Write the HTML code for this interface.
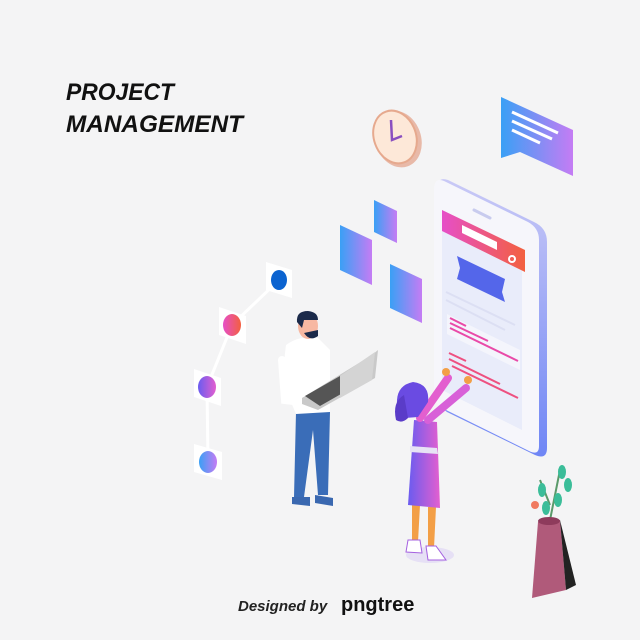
<!DOCTYPE html>
<html><head><style>
html,body{margin:0;padding:0;background:#f4f4f5;}
svg{display:block}
text{font-family:"Liberation Sans",sans-serif}
</style></head><body>
<svg width="640" height="640" viewBox="0 0 640 640" xmlns="http://www.w3.org/2000/svg">
<defs>
<linearGradient id="bp" x1="0" y1="0" x2="1" y2="0"><stop offset="0" stop-color="#3aa0f5"/><stop offset="1" stop-color="#c57cf4"/></linearGradient>
<linearGradient id="pk" x1="0" y1="0" x2="1" y2="0"><stop offset="0" stop-color="#e64fc8"/><stop offset="1" stop-color="#f3603f"/></linearGradient>
<linearGradient id="pu" x1="0" y1="0" x2="1" y2="0"><stop offset="0" stop-color="#6a5cf0"/><stop offset="1" stop-color="#e35fcf"/></linearGradient>
<linearGradient id="ph" x1="0" y1="0" x2="0" y2="1"><stop offset="0" stop-color="#c9c9f6"/><stop offset="1" stop-color="#6f86f5"/></linearGradient>
</defs>
<rect width="640" height="640" fill="#f4f4f5"/>
<text x="66" y="100" font-size="24" font-weight="bold" font-style="italic" fill="#111" textLength="108" lengthAdjust="spacingAndGlyphs">PROJECT</text>
<text x="66" y="132" font-size="24" font-weight="bold" font-style="italic" fill="#111" textLength="177" lengthAdjust="spacingAndGlyphs">MANAGEMENT</text>

<!-- clock -->
<ellipse cx="398" cy="139" rx="23" ry="29" transform="rotate(-20 398 139)" fill="#e8b9a8"/>
<ellipse cx="395" cy="137" rx="21" ry="27" transform="rotate(-20 395 137)" fill="#fde8d8" stroke="#e6a98e" stroke-width="2"/>
<path d="M391 120 L392 140 L402 136" stroke="#8a4fc0" stroke-width="2.5" fill="none"/>

<!-- chat bubble -->
<path d="M501 97 L573 130 L573 176 L520 152 L501 158 Z" fill="url(#bp)"/>
<path d="M512 112 L558 133 M512 121 L552 139 M512 130 L540 143" stroke="#fff" stroke-width="3"/>

<!-- floating squares -->
<path d="M340 225 L372 240 L372 285 L340 270 Z" fill="url(#bp)"/>
<path d="M374 200 L397 211 L397 243 L374 232 Z" fill="url(#bp)"/>
<path d="M390 264 L422 279 L422 323 L390 308 Z" fill="url(#bp)"/>

<!-- phone -->
<path d="M448 180 L534 222 Q547 228 547 242 L547 448 Q547 460 535 455 L447 412 Q437 405 437 392 L437 190 Q437 176 448 180 Z" fill="url(#ph)"/>
<path d="M444 181 L528 222 Q539 228 539 240 L539 446 Q539 456 529 451 L444 409 Q434 404 434 392 L434 190 Q434 177 444 181 Z" fill="#f6f6fb"/>
<path d="M442 210 L522 250 L522 430 L442 390 Z" fill="#e9ecfa"/>
<path d="M442 210 L525 250 L525 272 L442 231 Z" fill="url(#pk)"/>
<path d="M462 225 L497 242 L497 250 L462 233 Z" fill="#fff"/>
<circle cx="512" cy="259" r="3" fill="none" stroke="#fff" stroke-width="2"/>
<path d="M474 210 L490 218" stroke="#c8cbee" stroke-width="3" stroke-linecap="round"/>
<path d="M457 256 L505 279 L502 292 L505 302 L457 279 L460 268 Z" fill="#5466ea"/>
<path d="M446 292 L515 325 M446 300 L505 330" stroke="#dcdff3" stroke-width="2"/>
<path d="M447 314 L520 350 L520 370 L447 334 Z" fill="#f4f5fc"/>
<path d="M450 318 L466 326 M450 323 L488 341 M450 328 L518 361" stroke="#e94aa8" stroke-width="2"/>
<path d="M449 353 L466 361 M449 359 L500 384 M452 366 L518 398" stroke="#ee5080" stroke-width="2"/>

<!-- network nodes -->
<path d="M279 280 L232 325 L207 387 L208 462" stroke="#fff" stroke-width="3" fill="none"/>
<path d="M266 262 L292 270 L292 298 L266 290 Z" fill="#fff"/>
<ellipse cx="279" cy="280" rx="8" ry="10" fill="#0b63d0"/>
<path d="M219 307 L246 316 L246 344 L219 335 Z" fill="#fff"/>
<ellipse cx="232" cy="325" rx="9" ry="11" fill="url(#pk)"/>
<path d="M194 369 L221 378 L221 406 L194 397 Z" fill="#fff"/>
<ellipse cx="207" cy="387" rx="9" ry="11" fill="url(#pu)"/>
<path d="M194 444 L222 452 L222 480 L194 472 Z" fill="#fff"/>
<ellipse cx="208" cy="462" rx="9" ry="11" fill="url(#bp)"/>

<!-- man -->
<path d="M296 412 L330 412 L328 495 L318 495 L313 430 L304 497 L294 497 Z" fill="#3a6db8"/>
<path d="M292 497 L310 497 L310 506 L292 504 Z M315 495 L333 498 L333 506 L315 503 Z" fill="#3a68b0"/>
<path d="M286 345 Q300 335 318 338 L330 350 L330 412 L296 414 L288 395 Q282 370 286 345 Z" fill="#fff"/>
<path d="M282 360 L285 400 L302 402" stroke="#fff" stroke-width="8" fill="none" stroke-linecap="round"/>
<ellipse cx="308" cy="326" rx="10" ry="13" fill="#f7b8a2"/>
<path d="M297 322 Q296 311 308 311 Q318 312 318 320 L304 320 L302 328 Z" fill="#1b2a4a"/>
<path d="M304 333 Q310 342 318 336 L318 330 Z" fill="#1b2a4a"/>
<path d="M302 398 L372 355 L378 350 L375 378 L318 410 L302 404 Z" fill="#c9c9c9"/>
<path d="M305 396 L340 376 L355 386 L320 406 Z" fill="#555"/>
<path d="M340 376 L375 352 L372 380 L340 398 Z" fill="#d4d4d4"/>

<!-- woman -->
<ellipse cx="430" cy="555" rx="24" ry="8" fill="#e6e0f5"/>
<path d="M412 505 L420 505 L418 542 L412 542 Z M428 507 L436 507 L434 548 L428 548 Z" fill="#f39f46"/>
<path d="M408 540 L420 540 L422 553 L406 552 Z M426 546 L436 546 L446 560 L428 560 Z" fill="#fff" stroke="#a460e0" stroke-width="1"/>
<path d="M414 420 L437 422 L440 508 L408 505 Z" fill="url(#pu)"/>
<path d="M410 446 L437 448 L438 454 L410 452 Z" fill="#e7e3f5"/>
<path d="M420 418 L448 378" stroke="#e35fcf" stroke-width="8" stroke-linecap="round"/>
<path d="M428 420 L466 388" stroke="#d860d8" stroke-width="8" stroke-linecap="round"/>
<circle cx="446" cy="372" r="4" fill="#f39f46"/><circle cx="468" cy="380" r="4" fill="#f39f46"/>
<path d="M413 382 Q398 385 397 400 Q396 412 405 418 L418 417 L428 402 Q430 384 413 382 Z" fill="#6a4be2"/>
<path d="M404 395 Q392 402 396 420 Q402 424 408 418 Z" fill="#5a3cc8"/>

<!-- plant -->
<path d="M550 520 L560 470 M550 505 L540 480" stroke="#5a9a6a" stroke-width="2" fill="none"/>
<ellipse cx="562" cy="472" rx="4" ry="7" fill="#3bbd99"/>
<ellipse cx="568" cy="485" rx="4" ry="7" fill="#3bbd99"/>
<ellipse cx="542" cy="490" rx="4" ry="7" fill="#3bbd99"/>
<ellipse cx="558" cy="500" rx="4" ry="7" fill="#3bbd99"/>
<ellipse cx="546" cy="508" rx="4" ry="7" fill="#3bbd99"/>
<circle cx="535" cy="505" r="4" fill="#f07a60"/>
<path d="M538 522 L560 520 L566 590 L532 598 Z" fill="#b05a7a"/>
<path d="M560 520 L566 590 L576 585 Z" fill="#222"/>
<ellipse cx="549" cy="521" rx="11" ry="4" fill="#8e3b5c"/>

<!-- footer -->
<text x="238" y="611" font-size="15" font-weight="bold" font-style="italic" fill="#222">Designed by</text>
<text x="341" y="611" font-size="20" font-weight="bold" fill="#111">pngtree</text>
</svg>
</body></html>
